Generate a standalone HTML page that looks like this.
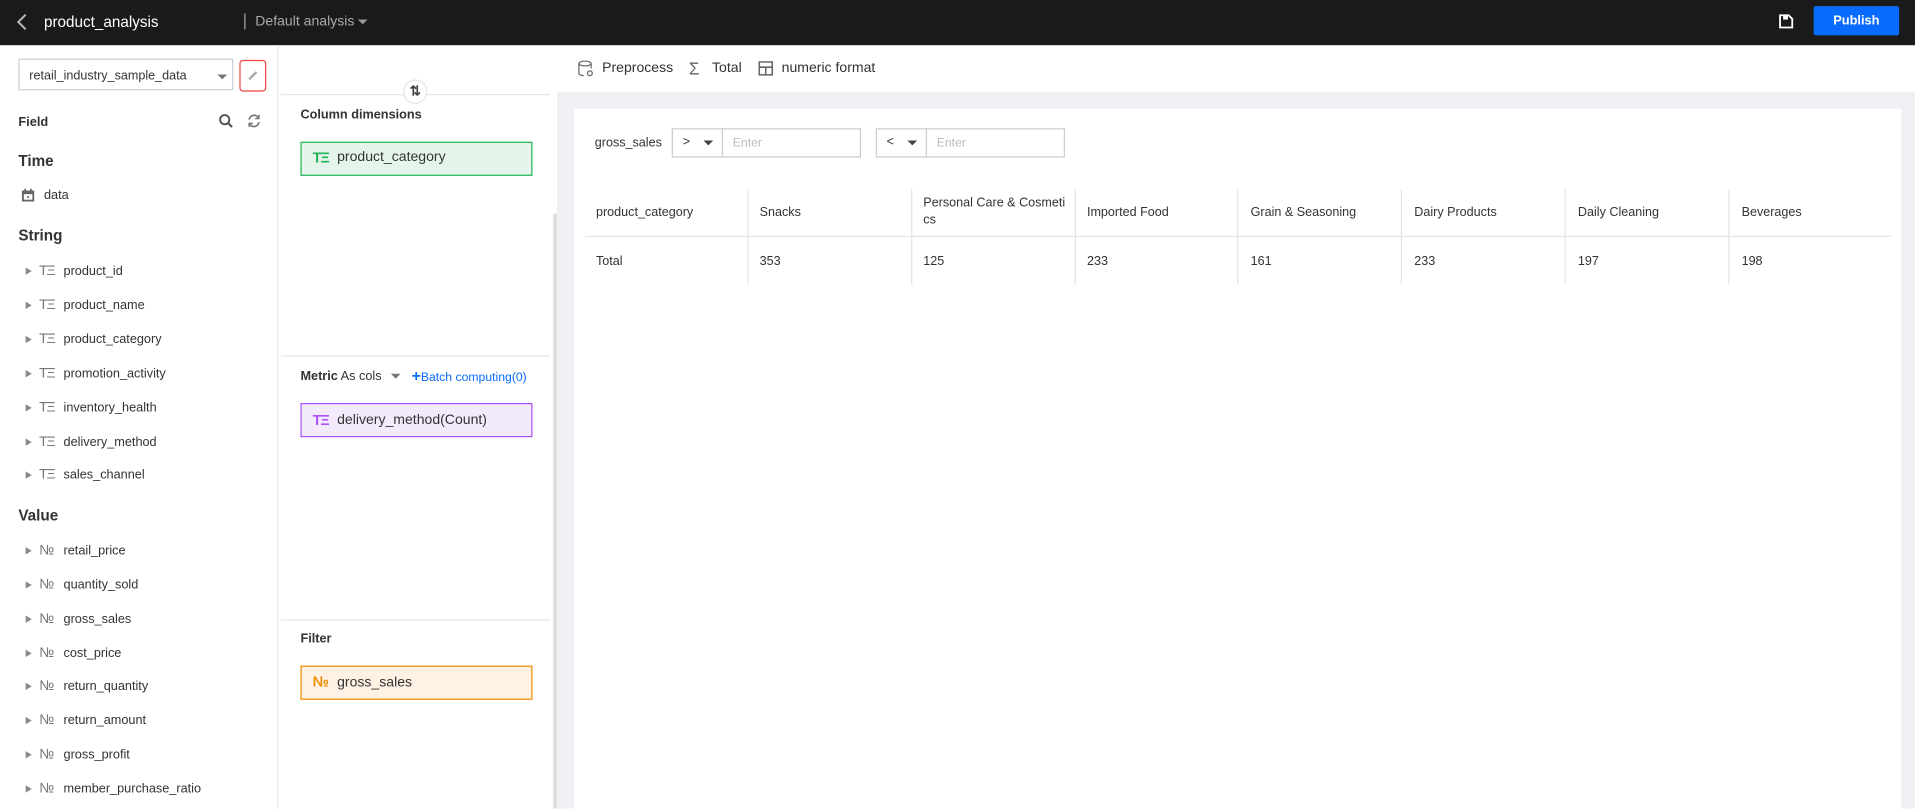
<!DOCTYPE html>
<html><head><meta charset="utf-8"><style>
html,body{margin:0;padding:0;width:1915px;height:808px;overflow:hidden;background:#fff}
#w{position:absolute;left:0;top:0;width:1568px;height:662px;transform:scale(1.22130);transform-origin:0 0;font-family:"Liberation Sans",Arial,sans-serif;color:#333;font-size:10.4px}
.a{position:absolute;white-space:nowrap}
.top{left:0;top:0;width:1568px;height:37px;background:#1a1a1a}
.b{font-weight:bold}
.ic{color:#777;font-size:11.5px;letter-spacing:-1px}
.tri{width:0;height:0;border-left:5px solid #888;border-top:3.5px solid transparent;border-bottom:3.5px solid transparent}
.car{width:0;height:0;border-top:4px solid #777;border-left:4px solid transparent;border-right:4px solid transparent}
.vl{position:absolute;top:155px;height:78px;width:1px;background:#e4e4e4}
.t{font-size:10.3px}
</style></head><body><div id="w">
<div class="a top"></div>
<svg class="a" style="left:13px;top:11px" width="10" height="14"><path d="M8 1 L2 7 L8 13" stroke="#bbb" stroke-width="1.6" fill="none"/></svg>
<div class="a" style="left:36px;top:11px;color:#fff;font-size:12.5px">product_analysis</div>
<div class="a" style="left:200px;top:11px;width:1px;height:13px;background:#aaa"></div>
<div class="a" style="left:209px;top:12px;color:#aaa;font-size:11.5px">Default analysis</div>
<div class="a car" style="left:293px;top:16px;border-top-color:#999"></div>
<svg class="a" style="left:1456px;top:11px" width="13" height="13"><path d="M1.5 1.5h7l3 3v7h-10z" stroke="#fff" stroke-width="1.5" fill="none"/><rect x="4" y="2" width="4" height="3" fill="#fff"/></svg>
<div class="a b" style="left:1485px;top:5px;width:70px;height:24px;background:#0a6cff;border-radius:2px;color:#fff;font-size:10.5px;text-align:center;line-height:24px">Publish</div>

<!-- left -->
<div class="a" style="left:227px;top:37px;width:1px;height:625px;background:#e5e5e5"></div>
<div class="a" style="left:15px;top:48px;width:176px;height:26px;border:1px solid #ccd0d8;box-sizing:border-box"></div>
<div class="a" style="left:24px;top:57px;font-size:10.3px">retail_industry_sample_data</div>
<div class="a car" style="left:178px;top:61px"></div>
<div class="a" style="left:196px;top:49px;width:22px;height:26px;border:1.5px solid #ef4444;border-radius:3px;box-sizing:border-box"></div>
<svg class="a" style="left:202px;top:56px" width="11" height="11"><path d="M2 9 L8 3" stroke="#aaa" stroke-width="2"/></svg>
<div class="a b" style="left:15px;top:94px;font-size:10.5px">Field</div>
<svg class="a" style="left:179px;top:93px" width="12" height="12"><circle cx="5" cy="5" r="3.8" stroke="#555" stroke-width="1.6" fill="none"/><path d="M8 8l3 3" stroke="#555" stroke-width="1.8"/></svg>
<svg class="a" style="left:202px;top:93px" width="12" height="12"><path d="M2 5a4 4 0 0 1 7.5-1.5M10 7a4 4 0 0 1-7.5 1.5" stroke="#777" stroke-width="1.4" fill="none"/><path d="M10 1v3h-3M2 11v-3h3" stroke="#777" stroke-width="1.2" fill="none"/></svg>
<div class="a b" style="left:15px;top:125px;font-size:12.5px">Time</div>
<svg class="a" style="left:17px;top:154px" width="12" height="12"><rect x="1" y="2" width="10" height="9" fill="#666"/><rect x="2.5" y="5" width="7" height="4.5" fill="#fff"/><rect x="3" y="0.5" width="1.3" height="2.5" fill="#666"/><rect x="7.7" y="0.5" width="1.3" height="2.5" fill="#666"/><rect x="5.3" y="6.5" width="1.5" height="1.5" fill="#666"/></svg>
<div class="a" style="left:36px;top:155px">data</div>
<div class="a b" style="left:15px;top:186px;font-size:12.5px">String</div>
<div class="a b" style="left:15px;top:415px;font-size:12.5px">Value</div>

<!-- middle -->
<div class="a" style="left:230px;top:77px;width:220px;height:1px;background:#e2e4ea"></div>
<div class="a" style="left:330px;top:65px;width:20px;height:20px;border:1px solid #e2e4ea;border-radius:50%;background:#fff;box-sizing:border-box;text-align:center;font-size:11px;line-height:18px;font-weight:bold;color:#444">⇅</div>
<div class="a b" style="left:246px;top:89px">Column dimensions</div>
<div class="a" style="left:246px;top:116px;width:190px;height:28px;background:#e6f5eb;border:1px solid #21b356;box-sizing:border-box"></div>
<div class="a b" style="left:256px;top:122px;color:#21b356;font-size:12px;letter-spacing:-1px">TΞ</div>
<div class="a" style="left:276px;top:123px;font-size:11.5px">product_category</div>
<div class="a" style="left:453px;top:175px;width:3px;height:487px;background:#ddd"></div>
<div class="a" style="left:230px;top:291px;width:220px;height:1px;background:#e2e4ea"></div>
<div class="a" style="left:246px;top:303px"><b>Metric</b> As cols</div>
<div class="a car" style="left:320px;top:306px"></div>
<div class="a" style="left:337px;top:303px;color:#0a6cff;font-size:10px"><b style="font-size:13px;line-height:10px">+</b>Batch computing(0)</div>
<div class="a" style="left:246px;top:330px;width:190px;height:28px;background:#f3eafd;border:1px solid #a855f7;box-sizing:border-box"></div>
<div class="a b" style="left:256px;top:337px;color:#a855f7;font-size:12px;letter-spacing:-1px">TΞ</div>
<div class="a" style="left:276px;top:338px;font-size:11.5px">delivery_method(Count)</div>
<div class="a" style="left:230px;top:507px;width:220px;height:1px;background:#e2e4ea"></div>
<div class="a b" style="left:246px;top:518px">Filter</div>
<div class="a" style="left:246px;top:545px;width:190px;height:28px;background:#fff2e5;border:1px solid #f08c00;box-sizing:border-box"></div>
<div class="a b" style="left:256px;top:551px;color:#f08c00;font-size:12px">№</div>
<div class="a" style="left:276px;top:553px;font-size:11.5px">gross_sales</div>

<!-- right -->
<div class="a" style="left:456px;top:75px;width:1112px;height:587px;background:#eff0f4"></div>
<div class="a" style="left:470px;top:89px;width:1087px;height:573px;background:#fff"></div>
<svg class="a" style="left:473px;top:49px" width="13" height="14"><ellipse cx="6" cy="3" rx="5" ry="2" stroke="#666" fill="none"/><path d="M1 3v8c0 1 2 2 4 2M11 3v4" stroke="#666" fill="none"/><circle cx="10" cy="11" r="2" stroke="#666" fill="none"/></svg>
<div class="a" style="left:493px;top:50px;font-size:11.5px">Preprocess</div>
<div class="a" style="left:564px;top:48px;font-size:14px;color:#666">Σ</div>
<div class="a" style="left:583px;top:50px;font-size:11.5px">Total</div>
<svg class="a" style="left:621px;top:50px" width="12" height="12"><rect x="0.7" y="0.7" width="10.6" height="10.6" stroke="#666" stroke-width="1.3" fill="none"/><path d="M1 5h10M6 5v6" stroke="#666" stroke-width="1.3"/></svg>
<div class="a" style="left:640px;top:50px;font-size:11.5px">numeric format</div>

<div class="a t" style="left:487px;top:112px">gross_sales</div>
<div class="a" style="left:550px;top:105px;width:155px;height:24px;border:1px solid #ccc;box-sizing:border-box"></div>
<div class="a" style="left:591px;top:105px;width:1px;height:24px;background:#ccc"></div>
<div class="a t" style="left:559px;top:111px">&gt;</div><div class="a car" style="left:576px;top:115px;border-top-color:#444"></div>
<div class="a" style="left:600px;top:112px;color:#bbb;font-size:10px">Enter</div>
<div class="a" style="left:717px;top:105px;width:155px;height:24px;border:1px solid #ccc;box-sizing:border-box"></div>
<div class="a" style="left:758px;top:105px;width:1px;height:24px;background:#ccc"></div>
<div class="a t" style="left:726px;top:111px">&lt;</div><div class="a car" style="left:743px;top:115px;border-top-color:#444"></div>
<div class="a" style="left:767px;top:112px;color:#bbb;font-size:10px">Enter</div>

<div class="a" style="left:479px;top:193px;width:1070px;height:1px;background:#e4e4e4"></div>
<div class="vl" style="left:612px"></div><div class="vl" style="left:746px"></div><div class="vl" style="left:880px"></div><div class="vl" style="left:1013px"></div><div class="vl" style="left:1147px"></div><div class="vl" style="left:1281px"></div><div class="vl" style="left:1415px"></div>
<div class="a t" style="left:488px;top:169px">product_category</div>
<div class="a t" style="left:622px;top:169px">Snacks</div>
<div class="a t" style="left:756px;top:160px;line-height:14px">Personal Care &amp; Cosmeti<br>cs</div>
<div class="a t" style="left:890px;top:169px">Imported Food</div>
<div class="a t" style="left:1024px;top:169px">Grain &amp; Seasoning</div>
<div class="a t" style="left:1158px;top:169px">Dairy Products</div>
<div class="a t" style="left:1292px;top:169px">Daily Cleaning</div>
<div class="a t" style="left:1426px;top:169px">Beverages</div>
<div class="a t" style="left:488px;top:209px">Total</div>
<div class="a t" style="left:622px;top:209px">353</div>
<div class="a t" style="left:756px;top:209px">125</div>
<div class="a t" style="left:890px;top:209px">233</div>
<div class="a t" style="left:1024px;top:209px">161</div>
<div class="a t" style="left:1158px;top:209px">233</div>
<div class="a t" style="left:1292px;top:209px">197</div>
<div class="a t" style="left:1426px;top:209px">198</div>

<!-- field list -->
<div class="a tri" style="left:21px;top:219px"></div><div class="a ic" style="left:32px;top:216px">TΞ</div><div class="a" style="left:52px;top:217px">product_id</div>
<div class="a tri" style="left:21px;top:247px"></div><div class="a ic" style="left:32px;top:244px">TΞ</div><div class="a" style="left:52px;top:245px">product_name</div>
<div class="a tri" style="left:21px;top:275px"></div><div class="a ic" style="left:32px;top:272px">TΞ</div><div class="a" style="left:52px;top:273px">product_category</div>
<div class="a tri" style="left:21px;top:303px"></div><div class="a ic" style="left:32px;top:300px">TΞ</div><div class="a" style="left:52px;top:301px">promotion_activity</div>
<div class="a tri" style="left:21px;top:331px"></div><div class="a ic" style="left:32px;top:328px">TΞ</div><div class="a" style="left:52px;top:329px">inventory_health</div>
<div class="a tri" style="left:21px;top:359px"></div><div class="a ic" style="left:32px;top:356px">TΞ</div><div class="a" style="left:52px;top:357px">delivery_method</div>
<div class="a tri" style="left:21px;top:386px"></div><div class="a ic" style="left:32px;top:383px">TΞ</div><div class="a" style="left:52px;top:384px">sales_channel</div>
<div class="a tri" style="left:21px;top:448px"></div><div class="a ic" style="left:32px;top:445px">№</div><div class="a" style="left:52px;top:446px">retail_price</div>
<div class="a tri" style="left:21px;top:476px"></div><div class="a ic" style="left:32px;top:473px">№</div><div class="a" style="left:52px;top:474px">quantity_sold</div>
<div class="a tri" style="left:21px;top:504px"></div><div class="a ic" style="left:32px;top:501px">№</div><div class="a" style="left:52px;top:502px">gross_sales</div>
<div class="a tri" style="left:21px;top:532px"></div><div class="a ic" style="left:32px;top:529px">№</div><div class="a" style="left:52px;top:530px">cost_price</div>
<div class="a tri" style="left:21px;top:559px"></div><div class="a ic" style="left:32px;top:556px">№</div><div class="a" style="left:52px;top:557px">return_quantity</div>
<div class="a tri" style="left:21px;top:587px"></div><div class="a ic" style="left:32px;top:584px">№</div><div class="a" style="left:52px;top:585px">return_amount</div>
<div class="a tri" style="left:21px;top:615px"></div><div class="a ic" style="left:32px;top:612px">№</div><div class="a" style="left:52px;top:613px">gross_profit</div>
<div class="a tri" style="left:21px;top:643px"></div><div class="a ic" style="left:32px;top:640px">№</div><div class="a" style="left:52px;top:641px">member_purchase_ratio</div>
</div></body></html>
